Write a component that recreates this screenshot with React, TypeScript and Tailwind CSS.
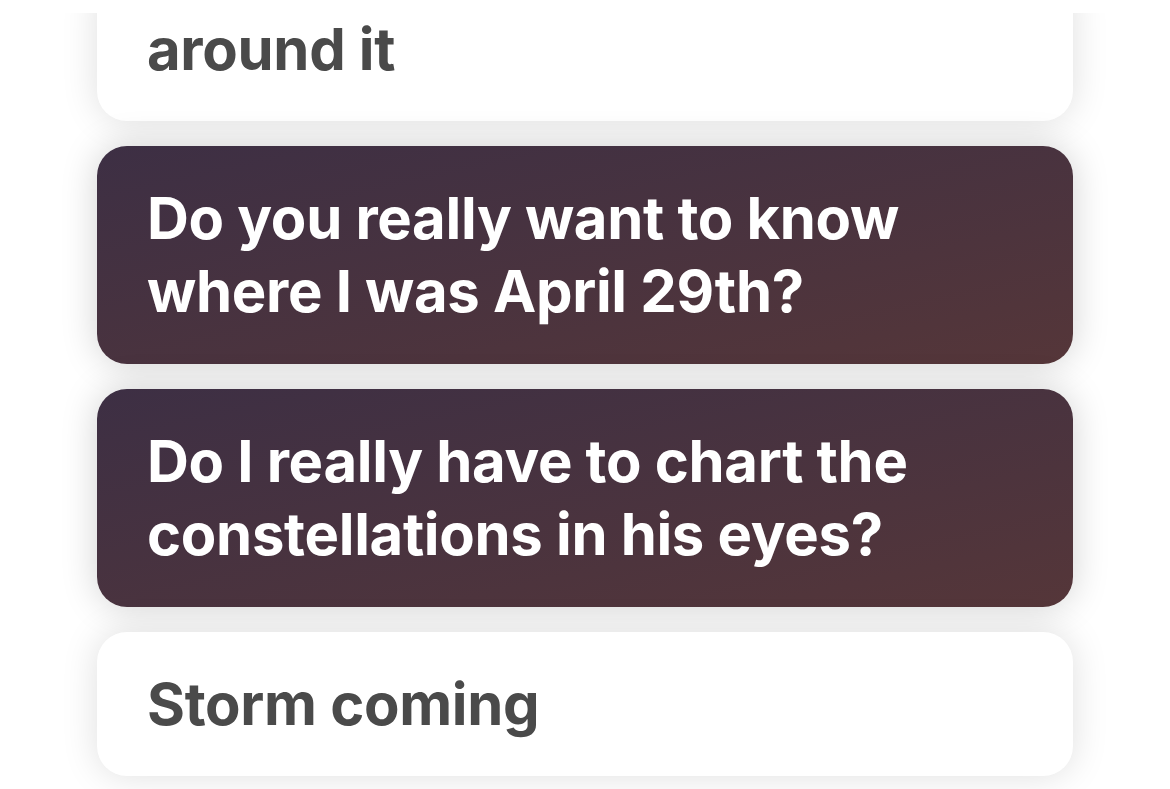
const lightCard =
  'rounded-[30px] bg-white px-[50px] py-[36px] text-[#4a4a4a] shadow-[0_0_36px_rgba(0,0,0,0.13)]';
const darkCard =
  'rounded-[30px] bg-gradient-to-br from-[#3d2f44] to-[#553639] px-[50px] py-[36px] text-white shadow-[0_0_36px_rgba(0,0,0,0.18)]';

const App: React.FC = () => {
  return (
    <div
      className="h-[789px] overflow-hidden bg-white pt-[13px]"
      style={{ fontFamily: 'Inter, "Noto Sans", sans-serif' }}
    >
      <div className="h-full overflow-hidden">
        <div className="flex flex-col gap-[25px] px-[97px] pb-[40px]">
          <div className={`${lightCard} -mt-[36px]`}>
            <p className="text-[58px] font-bold leading-[72px] tracking-[-0.3px]">around it</p>
          </div>
          <div className={darkCard}>
            <p className="text-[58px] font-bold leading-[73px] tracking-[-0.3px]">
              Do you really want to know
              <br />
              where I was April 29th?
            </p>
          </div>
          <div className={darkCard}>
            <p className="text-[58px] font-bold leading-[73px] tracking-[-0.3px]">
              Do I really have to chart the
              <br />
              constellations in his eyes?
            </p>
          </div>
          <div className={lightCard}>
            <p className="text-[58px] font-bold leading-[72px] tracking-[-0.3px]">Storm coming</p>
          </div>
        </div>
      </div>
    </div>
  );
};

export default App;
